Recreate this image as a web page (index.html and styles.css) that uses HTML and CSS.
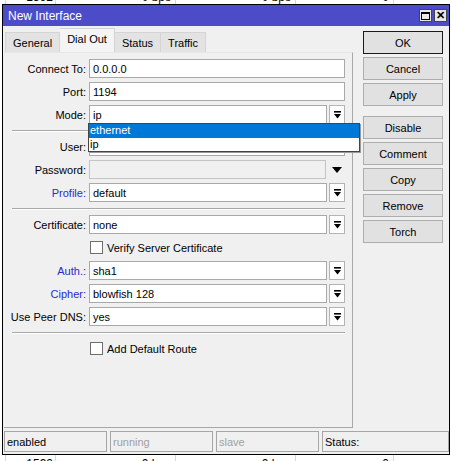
FILE: index.html
```html
<!DOCTYPE html>
<html>
<head>
<meta charset="utf-8">
<link rel="stylesheet" href="styles.css">
</head>
<body>
<div class="desk">
  <div class="trow first">
    <span class="cell c0">1592</span><span class="cell c1">0 bps</span><span class="cell c2">0 bps</span><span class="cell c3">0</span><span class="cell c4"></span>
  </div>
  <div class="spacer"></div>
  <div class="trow">
    <span class="cell c0">1592</span><span class="cell c1">0 bps</span><span class="cell c2">0 bps</span><span class="cell c3">0</span><span class="cell c4"></span>
  </div>
</div>
<div class="window">
  <div class="titlebar">
    <span class="title">New Interface</span>
    <div class="tbtns">
      <span class="tb max"><span class="sq"></span></span>
      <span class="tb close">✕</span>
    </div>
  </div>
  <div class="main">
    <div class="left">
      <div class="tabs">
        <span class="tab">General</span>
        <span class="tab active">Dial Out</span>
        <span class="tab">Status</span>
        <span class="tab">Traffic</span>
      </div>
      <div class="panel">
        <div class="form">
          <div class="row"><span class="lbl">Connect To:</span><span class="field">0.0.0.0</span></div>
          <div class="row"><span class="lbl">Port:</span><span class="field">1194</span></div>
          <div class="row"><span class="lbl">Mode:</span><span class="field">ip</span><span class="dd"><svg width="9" height="8" viewBox="0 0 9 8"><rect x="1" y="0" width="7" height="1.6" fill="#000"/><polygon points="1,3 8,3 4.5,7.5" fill="#000"/></svg></span></div>
          <div class="sep"></div>
          <div class="row"><span class="lbl">User:</span><span class="field"></span></div>
          <div class="row"><span class="lbl">Password:</span><span class="field disabled"></span><span class="arrow"><svg width="10" height="6" viewBox="0 0 10 6"><polygon points="0,0 10,0 5,6" fill="#000"/></svg></span></div>
          <div class="row"><span class="lbl blue">Profile:</span><span class="field">default</span><span class="dd"><svg width="9" height="8" viewBox="0 0 9 8"><rect x="1" y="0" width="7" height="1.6" fill="#000"/><polygon points="1,3 8,3 4.5,7.5" fill="#000"/></svg></span></div>
          <div class="sep"></div>
          <div class="row"><span class="lbl">Certificate:</span><span class="field">none</span><span class="dd"><svg width="9" height="8" viewBox="0 0 9 8"><rect x="1" y="0" width="7" height="1.6" fill="#000"/><polygon points="1,3 8,3 4.5,7.5" fill="#000"/></svg></span></div>
          <div class="row check"><span class="box"></span><span>Verify Server Certificate</span></div>
          <div class="row"><span class="lbl blue">Auth.:</span><span class="field">sha1</span><span class="dd"><svg width="9" height="8" viewBox="0 0 9 8"><rect x="1" y="0" width="7" height="1.6" fill="#000"/><polygon points="1,3 8,3 4.5,7.5" fill="#000"/></svg></span></div>
          <div class="row"><span class="lbl blue">Cipher:</span><span class="field">blowfish 128</span><span class="dd"><svg width="9" height="8" viewBox="0 0 9 8"><rect x="1" y="0" width="7" height="1.6" fill="#000"/><polygon points="1,3 8,3 4.5,7.5" fill="#000"/></svg></span></div>
          <div class="row"><span class="lbl">Use Peer DNS:</span><span class="field">yes</span><span class="dd"><svg width="9" height="8" viewBox="0 0 9 8"><rect x="1" y="0" width="7" height="1.6" fill="#000"/><polygon points="1,3 8,3 4.5,7.5" fill="#000"/></svg></span></div>
          <div class="sep"></div>
          <div class="row check"><span class="box"></span><span>Add Default Route</span></div>
        </div>
      </div>
    </div>
    <div class="buttons">
      <span class="btn default">OK</span>
      <span class="btn">Cancel</span>
      <span class="btn">Apply</span>
      <span class="btn group">Disable</span>
      <span class="btn">Comment</span>
      <span class="btn">Copy</span>
      <span class="btn">Remove</span>
      <span class="btn">Torch</span>
    </div>
  </div>
  <div class="statusbar">
    <span class="sf">enabled</span>
    <span class="sf dim">running</span>
    <span class="sf dim">slave</span>
    <span class="sf wide">Status:</span>
  </div>
</div>
<div class="droplist">
  <div class="opt sel">ethernet</div>
  <div class="opt">ip</div>
</div>
</body>
</html>
```
FILE: styles.css
```css
* { box-sizing: border-box; }
html, body { margin: 0; padding: 0; }
body {
  width: 451px;
  height: 461px;
  overflow: hidden;
  background: #fff;
  font-family: "Liberation Sans", Arial, sans-serif;
  font-size: 11px;
  color: #000;
  position: relative;
}

/* list table on the desktop behind the dialog */
.desk {
  display: flex;
  flex-direction: column;
  margin-top: -12px;
}
.trow {
  display: flex;
  height: 17px;
  padding-left: 5px;
}
.spacer { height: 450px; }
.cell {
  display: flex;
  align-items: center;
  justify-content: flex-end;
  height: 17px;
  border-left: 1px solid #d8d8d8;
  font-size: 12px;
  padding-right: 4px;
  white-space: nowrap;
}
.c0 { width: 50px; padding-right: 2px; }
.c1 { width: 120px; }
.c2 { width: 120px; }
.c3 { width: 98px; }
.c4 { width: 58px; }

/* dialog window */
.window {
  position: absolute;
  left: 2px;
  top: 4px;
  width: 448px;
  height: 451px;
  border: 1px solid #000;
  background: #f0f0f0;
  display: flex;
  flex-direction: column;
}
.titlebar {
  height: 21px;
  background: #4c4cc9;
  display: flex;
  align-items: center;
  justify-content: space-between;
  padding: 0 2px 0 5px;
}
.title {
  color: #fff;
  font-size: 12px;
}
.tbtns { display: flex; gap: 2px; }
.tb {
  width: 13px;
  height: 13px;
  background: #e8e8e8;
  border: 1px solid #444;
  display: flex;
  align-items: center;
  justify-content: center;
}
.tb .sq {
  width: 9px;
  height: 8px;
  border: 1px solid #000;
  border-top-width: 2px;
}
.tb.close {
  font-size: 11px;
  font-weight: bold;
  line-height: 1;
}

.main {
  display: flex;
  flex: 0 0 auto;
}
.left {
  width: 350px;
  padding-left: 1px;
}
.tabs {
  height: 26px;
  display: flex;
  align-items: flex-end;
  padding-left: 1px;
}
.tab {
  height: 20px;
  padding: 0 7px;
  background: #e3e3e3;
  border: 1px solid #d4d4d4;
  border-bottom: none;
  display: flex;
  align-items: center;
  font-size: 11px;
}
.tab + .tab { border-left: none; }
.tab.active {
  height: 24px;
  background: #f4f4f4;
  border-color: #d4d4d4;
  padding-bottom: 3px;
}
.panel {
  height: 376px;
  border-top: 1px solid #e6e6e6;
  border-right: 1px solid #a8a8a8;
  border-bottom: 1px solid #a8a8a8;
  padding: 6px 7px 0 0;
}
.form {
  display: flex;
  flex-direction: column;
  gap: 4px;
}
.row {
  height: 19px;
  display: flex;
  align-items: center;
}
.lbl {
  width: 82px;
  text-align: right;
  margin-right: 3px;
  white-space: nowrap;
}
.lbl.blue { color: #2b2bcc; }
.field {
  flex: 1;
  height: 19px;
  background: #fff;
  border: 1px solid #a9a9a9;
  padding-left: 3px;
  display: flex;
  align-items: center;
}
.field.disabled {
  background: #f0f0f0;
  border-color: #c4c4c4;
  flex: 0 0 237px;
}
.dd {
  width: 16px;
  height: 19px;
  margin-left: 2px;
  background: #fff;
  border: 1px solid #b4b4b4;
  display: flex;
  align-items: center;
  justify-content: center;
}
.arrow {
  flex: 1;
  display: flex;
  align-items: center;
  justify-content: center;
  padding-left: 2px;
}
.sep {
  height: 5px;
  margin-left: 8px;
  border-top: 1px solid #a8a8a8;
  box-shadow: inset 0 1px 0 #fff;
  margin-top: 2px;
  margin-bottom: -2px;
}
.row.check {
  padding-left: 86px;
}
.box {
  width: 13px;
  height: 13px;
  background: #fff;
  border: 1px solid #6d6d6d;
  margin-right: 4px;
}

.buttons {
  margin-left: 10px;
  padding-top: 5px;
  display: flex;
  flex-direction: column;
  gap: 3px;
}
.btn {
  width: 80px;
  height: 23px;
  background: #e1e1e1;
  border: 1px solid #adadad;
  display: flex;
  align-items: center;
  justify-content: center;
  font-size: 11px;
}
.btn.default { border: 1px solid #1a1a1a; }
.btn.group { margin-top: 7px; }

.statusbar {
  display: flex;
  gap: 3px;
  padding-top: 3px;
  padding-left: 1px;
}
.sf {
  width: 103px;
  height: 21px;
  border: 1px solid #a6a6a6;
  display: flex;
  align-items: center;
  padding-left: 2px;
  font-size: 11px;
}
.sf.dim { color: #a0a0a0; }
.sf.wide { width: 127px; }

/* open combo dropdown overlay */
.droplist {
  position: absolute;
  left: 88px;
  top: 123px;
  width: 272px;
  height: 29px;
  background: #fff;
  border: 1px solid #444;
  box-shadow: 1px 1px 0 #9a9a9a;
}
.opt {
  height: 13.5px;
  line-height: 13px;
  padding-left: 1px;
  font-size: 11px;
}
.opt.sel {
  background: #0078d7;
  color: #fff;
}
```
